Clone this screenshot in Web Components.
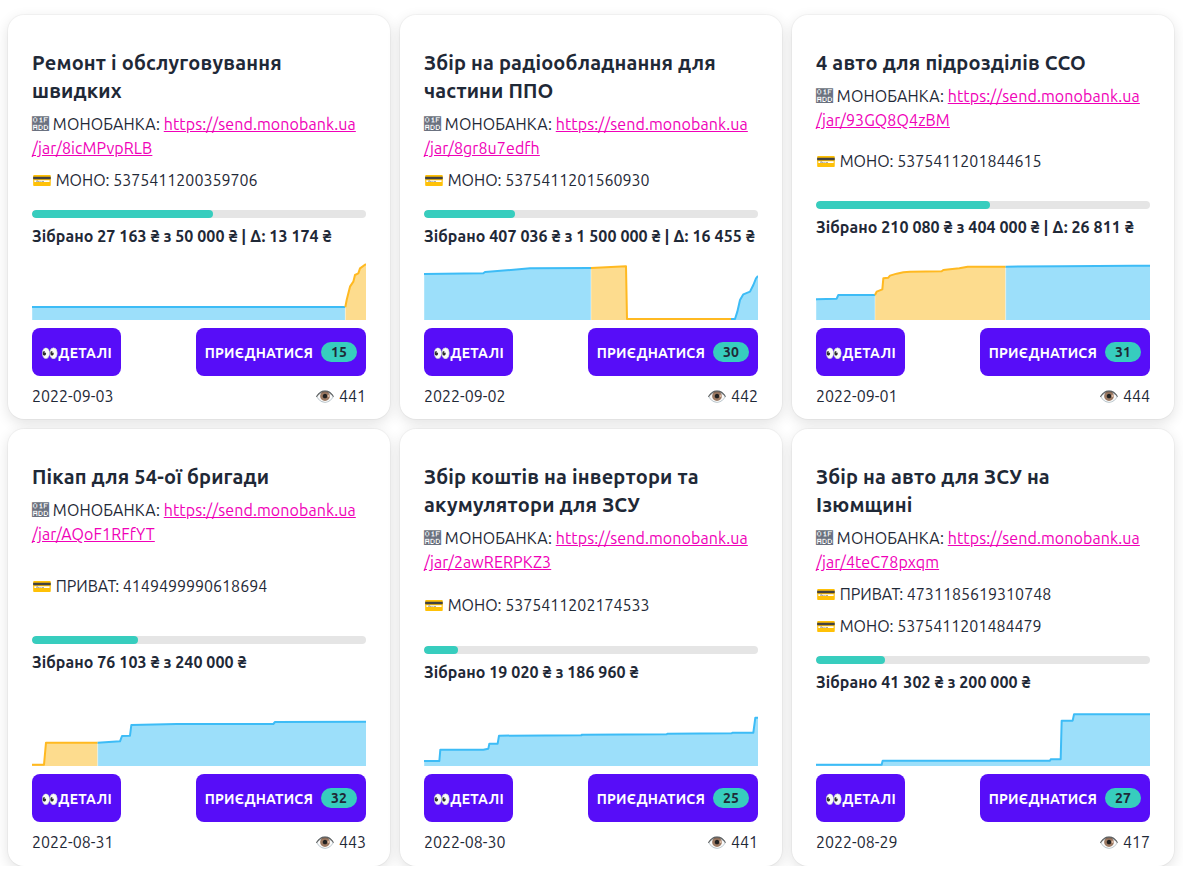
<!DOCTYPE html>
<html lang="uk">
<head>
<meta charset="utf-8">
<title>Збори</title>
<style>
  html, body { margin: 0; background: #fff; }
  body { padding: 15px 9px 0 8px; font-family: Ubuntu, "Noto Sans", "Open Sans", sans-serif; color: #1f2937; }
</style>
</head>
<body>
<fund-grid>
  <fund-card title="Ремонт і обслуговування швидких" jar="8icMPvpRLB" pct="54.3" raised="Зібрано 27 163 ₴ з 50 000 ₴ | Δ: 13 174 ₴" count="15" date="2022-09-03" views="441" box="96 24">
    <pay-line>МОНО: 5375411200359706</pay-line>
    <spark-line slot="chart" color="blue" pts="96,201 1036,201"></spark-line>
    <spark-line slot="chart" color="orange" pts="1036,201 1040,180 1050,140 1060,125 1065,105 1075,100 1080,85 1098,72"></spark-line>
  </fund-card>
  <fund-card title="Збір на радіообладнання для частини ППО" jar="8gr8u7edfh" pct="27.2" raised="Зібрано 407 036 ₴ з 1 500 000 ₴ | Δ: 16 455 ₴" count="30" date="2022-09-02" views="442" box="72 -6">
    <pay-line>МОНО: 5375411201560930</pay-line>
    <spark-line slot="chart" color="blue" pts="72,72 250,70 255,66 320,61 390,55 573,54"></spark-line>
    <spark-line slot="chart" color="orange" pts="573,54 678,49 681,207 993,207"></spark-line>
    <spark-line slot="chart" color="blue" pts="993,207 1005,207 1012,185 1020,150 1030,133 1050,125 1060,105 1068,85 1074,78"></spark-line>
  </fund-card>
  <fund-card title="4 авто для підрозділів ССО" jar="93GQ8Q4zBM" pct="52" raised="Зібрано 210 080 ₴ з 404 000 ₴ | Δ: 26 811 ₴" count="31" date="2022-09-01" views="444" box="48 -6">
    <pay-line>МОНО: 5375411201844615</pay-line>
    <spark-line slot="chart" color="blue" pts="48,148 110,146 115,135 225,135"></spark-line>
    <spark-line slot="chart" color="orange" pts="225,135 230,125 247,118 250,85 265,83 270,77 290,71 310,67 330,65 425,64 430,60 450,58 478,55 503,50 617,50"></spark-line>
    <spark-line slot="chart" color="blue" pts="617,50 785,49 1000,47 1050,47"></spark-line>
  </fund-card>
  <fund-card title="Пікап для 54-ої бригади" jar="AQoF1RFfYT" pct="31.7" raised="Зібрано 76 103 ₴ з 240 000 ₴" count="32" date="2022-08-31" views="443" box="96 -18">
    <pay-line>ПРИВАТ: 4149499990618694</pay-line>
    <spark-line slot="chart" color="orange" pts="96,194 132,194 138,128 293,128"></spark-line>
    <spark-line slot="chart" color="blue" pts="293,128 360,124 366,108 390,107 394,75 530,72 820,72 825,66 1098,65"></spark-line>
  </fund-card>
  <fund-card title="Збір коштів на інвертори та акумулятори для ЗСУ" jar="2awRERPKZ3" pct="10.2" raised="Зібрано 19 020 ₴ з 186 960 ₴" count="25" date="2022-08-30" views="441" box="72 -18">
    <pay-line>МОНО: 5375411202174533</pay-line>
    <spark-line slot="chart" color="blue" pts="72,183 118,183 121,149 250,149 265,146 268,131 293,131 297,107 545,106 545,104 800,103 802,101 995,100 997,98 1060,98 1066,53 1074,53"></spark-line>
  </fund-card>
  <fund-card title="Збір на авто для ЗСУ на Ізюмщині" jar="4teC78pxqm" pct="20.7" raised="Зібрано 41 302 ₴ з 200 000 ₴" count="27" date="2022-08-29" views="417" box="48 -18">
    <pay-line>ПРИВАТ: 4731185619310748</pay-line>
    <pay-line>МОНО: 5375411201484479</pay-line>
    <spark-line slot="chart" color="blue" pts="48,194 245,194 248,182 750,182 752,178 782,178 785,62 818,62 822,43 1050,43"></spark-line>
  </fund-card>
</fund-grid>

<script>
  class FundGrid extends HTMLElement {
    constructor() {
      super();
      this.attachShadow({ mode: "open" });
    }

    connectedCallback() {
      this.shadowRoot.innerHTML = `
        <style>
          :host {
            display: grid;
            grid-template-columns: repeat(3, 1fr);
            column-gap: 10px;
            row-gap: 10px;
          }
        </style>
        <slot></slot>
      `;
    }
  }

  class PayLine extends HTMLElement {
    constructor() {
      super();
      this.attachShadow({ mode: "open" });
    }

    connectedCallback() {
      this.shadowRoot.innerHTML = `
        <style>
          :host { display: block; font-size: 16px; line-height: 24px; margin-bottom: 8px; }
        </style>
        💳 <slot></slot>
      `;
    }
  }

  // one stretch of the chart, points are in the viewBox units of the card (3x)
  class SparkLine extends HTMLElement {
    constructor() {
      super();
      this.attachShadow({ mode: "open" });
    }

    connectedCallback() {
      const colors = {
        blue: { line: "#3dbcf6", fill: "#9cdffa" },
        orange: { line: "#ffb921", fill: "#fddc8e" }
      };
      const c = colors[this.getAttribute("color")];
      const pts = this.getAttribute("pts");
      const [bx, by] = this.closest("fund-card").getAttribute("box").split(" ").map(Number);
      const [first, firstY] = pts.split(" ")[0].split(",").map(Number);
      const last = pts.split(" ").pop().split(",")[0];
      const bottom = by + 216;
      this.shadowRoot.innerHTML = `
        <style>
          :host { position: absolute; inset: 0; display: block; }
          svg { display: block; width: 100%; height: 100%; }
        </style>
        <svg viewBox="${bx} ${by} 1002 216" preserveAspectRatio="none">
          <polygon points="${first},${bottom} ${pts} ${last},${bottom}" fill="${c.fill}"></polygon>
          <line x1="${first}" y1="${firstY + 4}" x2="${first}" y2="${bottom}" stroke="#fff" stroke-opacity=".6" stroke-width="2"></line>
          <polyline points="${pts}" fill="none" stroke="${c.line}" stroke-width="6" stroke-linejoin="round"></polyline>
        </svg>
      `;
    }
  }

  class FundCard extends HTMLElement {
    constructor() {
      super();
      this.attachShadow({ mode: "open" });
    }

    connectedCallback() {
      const attr = (name) => this.getAttribute(name);
      this.shadowRoot.innerHTML = `
        <style>
          :host {
            display: flex;
            flex-direction: column;
            justify-content: space-between;
            box-sizing: border-box;
            background: #fff;
            border-radius: 16px;
            padding: 33.9px 24px 11.6px;
            box-shadow: 0 0 0 1px rgba(0, 0, 0, .03), 0 4px 14px rgba(0, 0, 0, .12);
            font-size: 16px;
            line-height: 24px;
            color: #1f2937;
          }
          h2 { margin: 0 0 7px; font-size: 20px; line-height: 28px; font-weight: 700; letter-spacing: .17px; }
          a { color: #f000b8; text-decoration: underline; }
          .jar { margin-bottom: 8px; letter-spacing: .1px; }
          .tofu { font-size: 17px; color: #6b7280; }
          .pays { margin-bottom: 10px; }
          .bar { height: 8px; border-radius: 8px; background: #e5e5e5; overflow: hidden; }
          .bar div { height: 100%; border-radius: 8px; background: #37cdbe; }
          .raised { margin-top: 6px; font-size: 16px; font-weight: 700; letter-spacing: .07px; white-space: nowrap; }
          .chart { position: relative; height: 72px; overflow: hidden; }
          .actions { display: flex; justify-content: space-between; margin-top: 8px; }
          .btn {
            display: flex;
            align-items: center;
            height: 48px;
            box-sizing: border-box;
            padding: 2px 9px 0;
            border-radius: 8px;
            background: #570df8;
            color: #fff;
            font-size: 14px;
            font-weight: 700;
            letter-spacing: .17px;
            white-space: nowrap;
          }
          .btn.details { padding-right: 9px; letter-spacing: .3px; }
          .badge {
            display: flex;
            align-items: center;
            justify-content: center;
            width: 36px;
            height: 20px;
            margin: -2px 0 0 8px;
            border-radius: 10px;
            background: #37cdbe;
            color: #1f2937;
          }
          .foot { display: flex; justify-content: space-between; margin-top: 8px; }
        </style>
        <div class="head">
          <h2>${attr("title")}</h2>
          <div class="jar"><span class="tofu">&#x1FADD;</span> МОНОБАНКА: <a href="#">https://send.monobank.ua<wbr>/jar/${attr("jar")}</a></div>
        </div>
        <div class="pays"><slot></slot></div>
        <div class="progress">
          <div class="bar"><div style="width: ${attr("pct")}%"></div></div>
          <div class="raised">${attr("raised")}</div>
        </div>
        <div class="bottom">
          <div class="chart"><slot name="chart"></slot></div>
          <div class="actions">
            <div class="btn details">👀ДЕТАЛІ</div>
            <div class="btn">ПРИЄДНАТИСЯ<span class="badge">${attr("count")}</span></div>
          </div>
          <div class="foot">
            <span>${attr("date")}</span>
            <span>👁️ ${attr("views")}</span>
          </div>
        </div>
      `;
    }
  }

  customElements.define("fund-grid", FundGrid);
  customElements.define("fund-card", FundCard);
  customElements.define("pay-line", PayLine);
  customElements.define("spark-line", SparkLine);
</script>
</body>
</html>
